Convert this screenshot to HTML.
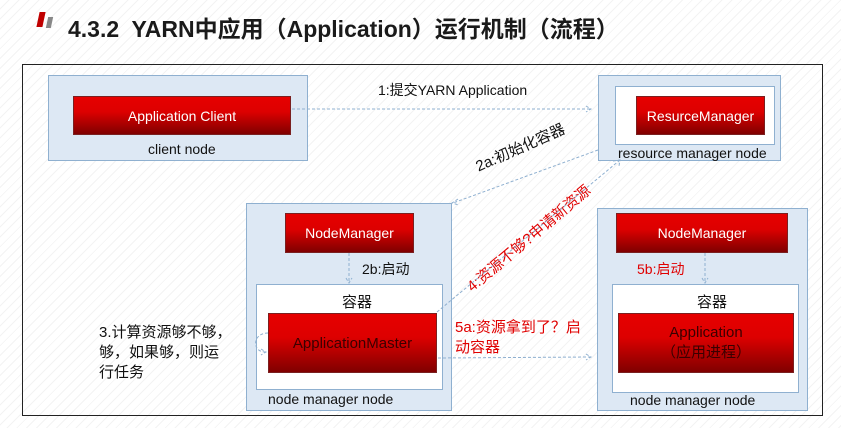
<!DOCTYPE html>
<html><head><meta charset="utf-8"><style>
*{margin:0;padding:0;box-sizing:border-box}
body{width:841px;height:428px;overflow:hidden;position:relative;font-family:"Liberation Sans","Noto Sans CJK SC",sans-serif;
background:repeating-linear-gradient(135deg,#fff 0 6px,#f3f3f3 6px 7px);}
.a{position:absolute}
.node{position:absolute;background:#dde8f4;border:1px solid #8fb0d0}
.white{position:absolute;background:#fff;border:1px solid #8fb0d0}
.red{position:absolute;background:linear-gradient(#e60000,#dd0000 40%,#800000);border:1px solid #7a2020;color:#fff;font-size:14px;display:flex;align-items:center;justify-content:center;text-align:center}
.t{position:absolute;font-size:14px;color:#111;white-space:nowrap}
.r{color:#e00000}
</style></head><body>
<div class="a" style="left:38px;top:12px;width:6px;height:15px;background:#c00000;transform:skewX(-12deg)"></div>
<div class="a" style="left:47px;top:17px;width:5px;height:11px;background:#888;transform:skewX(-12deg)"></div>
<div class="t" style="left:68px;top:10px;font-size:23px;font-weight:bold;color:#1a1a1a">4.3.2&nbsp; YARN中应用（Application）运行机制（流程）</div>
<div class="a" style="left:22px;top:64px;width:801px;height:352px;border:1px solid #222"></div>

<div class="node" style="left:48px;top:75px;width:260px;height:86px"></div>
<div class="red" style="left:73px;top:96px;width:218px;height:39px">Application Client</div>
<div class="t" style="left:148px;top:141px">client node</div>

<div class="node" style="left:598px;top:75px;width:183px;height:86px"></div>
<div class="white" style="left:615px;top:86px;width:160px;height:59px"></div>
<div class="red" style="left:636px;top:96px;width:129px;height:39px">ResurceManager</div>
<div class="t" style="left:618px;top:145px">resource manager node</div>

<div class="node" style="left:246px;top:203px;width:206px;height:208px"></div>
<div class="red" style="left:285px;top:213px;width:129px;height:40px">NodeManager</div>
<div class="white" style="left:256px;top:284px;width:187px;height:106px"></div>
<div class="t" style="left:342px;top:291px;font-size:15px">容器</div>
<div class="red" style="left:268px;top:313px;width:169px;height:60px;color:#3a0000;font-size:15px">ApplicationMaster</div>
<div class="t" style="left:268px;top:391px">node manager node</div>
<div class="t" style="left:362px;top:259px">2b:启动</div>

<div class="node" style="left:597px;top:208px;width:211px;height:203px"></div>
<div class="red" style="left:616px;top:213px;width:172px;height:40px">NodeManager</div>
<div class="white" style="left:612px;top:284px;width:187px;height:109px"></div>
<div class="t" style="left:697px;top:291px;font-size:15px">容器</div>
<div class="red" style="left:618px;top:313px;width:176px;height:60px;color:#3a0000;font-size:15px;line-height:20px">Application<br>（应用进程）</div>
<div class="t" style="left:630px;top:392px">node manager node</div>
<div class="t r" style="left:637px;top:259px">5b:启动</div>

<div class="t" style="left:378px;top:80px">1:提交YARN Application</div>
<div class="t" style="left:472px;top:157px;transform:rotate(-24deg);transform-origin:left top;font-size:15px">2a:初始化容器</div>
<div class="t r" style="left:462px;top:280px;transform:rotate(-40deg);transform-origin:left top;font-size:15px">4:资源不够?申请新资源</div>
<div class="t r" style="left:455px;top:318px;line-height:20px;font-size:15px">5a:资源拿到了？启<br>动容器</div>
<div class="t" style="left:99px;top:323px;line-height:20px;font-size:15px">3.计算资源够不够，<br>够，如果够，则运<br>行任务</div>

<svg class="a" style="left:0;top:0" width="841" height="428">
<g stroke="#8fb0d0" stroke-dasharray="3,2" fill="none" stroke-width="1">
<line x1="292" y1="109" x2="590" y2="109"/><path d="M586 106 L591 109 L586 112"/>
<line x1="598" y1="150" x2="453" y2="203"/><path d="M458 199 L452 203 L459 205"/>
<line x1="437" y1="312" x2="620" y2="160"/><path d="M613 161 L620 160 L619 166"/>
<line x1="349" y1="253" x2="349" y2="282"/><path d="M346 278 L349 283 L352 278"/>
<line x1="705" y1="253" x2="705" y2="282"/><path d="M702 278 L705 283 L708 278"/>
<line x1="438" y1="358" x2="590" y2="357"/><path d="M586 354 L591 357 L586 360"/>
<path d="M268 333 C252 333 252 352 265 352"/><path d="M261 349 L266 352 L261 355"/>
</g></svg>
</body></html>
